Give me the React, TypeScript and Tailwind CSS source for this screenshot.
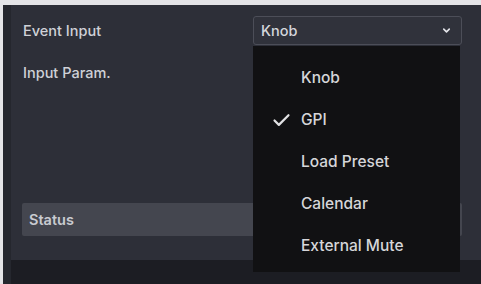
import { Check, ChevronDown } from "lucide-react";

const options = ["Knob", "GPI", "Load Preset", "Calendar", "External Mute"];

function EventSelect() {
  const selected = "GPI";

  return (
    <div className="relative w-[209px]">
      <div className="flex h-[29px] items-center justify-between rounded-[3px] border border-[#4c4e58] bg-[#30323b] pl-[7px] pr-[9px]">
        <span className="text-[14.5px] font-medium text-[#d4d6dc]">Knob</span>
        <ChevronDown className="h-[11px] w-[11px] text-[#e4e5ea]" strokeWidth={3.5} />
      </div>
      <div className="absolute left-0 top-[30px] z-10 flex h-[226px] w-[207px] flex-col bg-[#111113] pt-[11px]">
        {options.map((opt) => (
          <div key={opt} className="flex h-[42px] items-center">
            <div className="flex w-[48px] justify-end pr-[9px]">
              {opt === selected && (
                <Check className="h-[21px] w-[21px] text-[#e2e2e4]" strokeWidth={2.5} />
              )}
            </div>
            <span className="text-[15.5px] font-medium text-[#d6d6d9]">{opt}</span>
          </div>
        ))}
      </div>
    </div>
  );
}

export default function App() {
  return (
    <div
      className="h-[284px] w-[481px] overflow-hidden bg-[#e4e4e7] pl-[3px] pt-[5px]"
      style={{ fontFamily: "Inter, 'Noto Sans', sans-serif" }}
    >
      <div className="flex h-[279px] bg-[#2d2f38]">
        <div className="w-[8px] bg-[#25272e]" />
        <div className="flex flex-1 flex-col">
          <div className="mt-[11px] flex h-[29px] items-center justify-between pl-[12px] pr-[19px]">
            <span className="text-[14.5px] font-medium text-[#cfd1d7]">Event Input</span>
            <EventSelect />
          </div>
          <div className="mt-[19px] pl-[12px] text-[14.5px] font-medium leading-[18px] text-[#cfd1d7]">
            Input Param.
          </div>
          <div className="mt-[121px] ml-[11px] mr-[19px] flex h-[33px] items-center rounded-[2px] bg-[#44464f] px-[7px]">
            <span className="text-[14.5px] font-semibold text-[#c9cbd1]">Status</span>
          </div>
          <div className="mt-auto h-[24px] bg-[#1c1d23]" />
        </div>
      </div>
    </div>
  );
}
